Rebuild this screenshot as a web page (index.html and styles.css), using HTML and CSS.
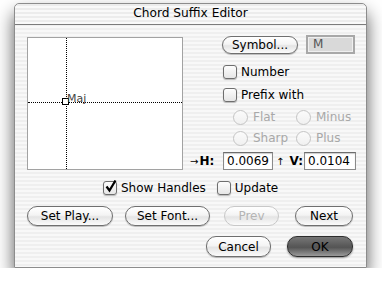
FILE: index.html
```html
<!DOCTYPE html>
<html lang="en">
<head>
  <meta charset="UTF-8">
  <title>Chord Suffix Editor</title>
  <link rel="stylesheet" href="styles.css">
</head>
<body>
  <div class="window">
    <div class="titlebar">Chord Suffix Editor</div>
    <div class="body">
      <div class="top">
        <div class="canvas">
          <div class="guide-v"></div>
          <div class="guide-h"></div>
          <div class="handle"></div>
          <span class="suffix">Maj</span>
        </div>
        <div class="side">
          <div class="symbol-row">
            <button class="btn symbol">Symbol...</button>
            <div class="field gray">M</div>
          </div>
          <label class="check first"><span class="box"></span>Number</label>
          <label class="check second"><span class="box"></span>Prefix with</label>
          <div class="radios">
            <span class="radio"><span class="dot"></span>Flat</span>
            <span class="radio"><span class="dot"></span>Minus</span>
            <span class="radio"><span class="dot"></span>Sharp</span>
            <span class="radio"><span class="dot"></span>Plus</span>
          </div>
          <div class="coords">
            <span class="axis"><span class="arrow">&#8594;</span>H:</span>
            <div class="field h">0.0069</div>
            <span class="axis v"><span class="arrow">&#8593;</span> V:</span>
            <div class="field v">0.0104</div>
          </div>
        </div>
      </div>
      <div class="handles-row">
        <label class="check"><span class="box on">
          <svg width="13" height="13" viewBox="0 0 13 13"><path d="M2.5 6.5 L5.5 10.5 L11.5 0.5" fill="none" stroke="#000" stroke-width="2.2"/></svg>
        </span>Show Handles</label>
        <label class="check update"><span class="box"></span>Update</label>
      </div>
      <div class="btn-row">
        <button class="btn play">Set Play...</button>
        <button class="btn font">Set Font...</button>
        <button class="btn prev" disabled>Prev</button>
        <button class="btn next">Next</button>
      </div>
      <div class="btn-row end">
        <button class="btn cancel">Cancel</button>
        <button class="btn ok">OK</button>
      </div>
    </div>
  </div>
</body>
</html>
```

FILE: styles.css
```css
body {
  margin: 0;
  background: #ffffff;
  font-family: "DejaVu Sans", sans-serif;
  font-size: 12px;
  color: #000;
}
.window {
  box-sizing: border-box;
  width: 353px;
  height: 265px;
  margin: 3px 0 0 14px;
  border: 1px solid #8c8c8c;
  border-radius: 5px 5px 0 0;
  background: repeating-linear-gradient(#efefef 0 2px, #f8f8f8 2px 4px);
  box-shadow: 0 10px 18px rgba(0, 0, 0, 0.65);
}
.titlebar {
  height: 20px;
  line-height: 19px;
  text-align: center;
  font-size: 12.2px;
  border-bottom: 1px solid #7b7b7b;
  background: repeating-linear-gradient(#ececec 0 2px, #f9f9f9 2px 4px);
  border-radius: 5px 5px 0 0;
}
.body {
  padding: 10px 13px 0 12px;
}
.top {
  display: flex;
  align-items: flex-start;
}
.canvas {
  flex: none;
  position: relative;
  box-sizing: border-box;
  width: 156px;
  height: 133px;
  margin-top: 2px;
  background: #fff;
  border: 1px solid #a2a2a2;
}
.guide-v {
  position: absolute;
  left: 38px;
  top: 0;
  bottom: 0;
  border-left: 1px dotted #000;
}
.guide-h {
  position: absolute;
  top: 64px;
  left: 0;
  right: 0;
  border-top: 1px dotted #000;
}
.handle {
  position: absolute;
  left: 34px;
  top: 60px;
  width: 5px;
  height: 5px;
  background: #fff;
  border: 1.5px solid #000;
}
.suffix {
  position: absolute;
  left: 39px;
  top: 54px;
  font-size: 11px;
  color: #444;
}
.side {
  flex: none;
  width: 163px;
  margin-left: 7px;
}
.symbol-row {
  display: flex;
  align-items: center;
  margin-left: 32px;
}
.btn {
  flex: none;
  box-sizing: border-box;
  height: 20px;
  padding: 0;
  font-family: "DejaVu Sans", sans-serif;
  font-size: 12px;
  color: #000;
  border: 1px solid #6f6f6f;
  border-radius: 10px;
  background: linear-gradient(#ffffff, #f4f4f4 45%, #e4e4e4 55%, #fbfbfb);
  box-shadow: 0 1px 1px rgba(0, 0, 0, 0.25);
}
.btn.symbol {
  width: 76px;
  height: 18px;
  margin-top: 1px;
}
.field {
  flex: none;
  box-sizing: border-box;
  height: 18px;
  padding-left: 3px;
  line-height: 16px;
  background: #fff;
  border: 1px solid #8a8a8a;
  border-top-color: #6d6d6d;
  box-shadow: inset 0 1px 1px rgba(0, 0, 0, 0.2);
}
.field.gray {
  width: 49px;
  height: 19px;
  margin-left: 8px;
  padding-left: 5px;
  line-height: 15px;
  color: #555;
  background: #d9d9d9;
  border: 2px solid #a8a8a8;
  box-shadow: inset 0 0 0 1px #efefef;
}
.check {
  display: flex;
  align-items: center;
  height: 16px;
}
.box {
  box-sizing: border-box;
  width: 14px;
  height: 14px;
  margin-right: 4px;
  border: 1px solid #6e6e6e;
  border-radius: 3px;
  background: linear-gradient(#fdfdfd, #e6e6e6);
  box-shadow: 0 1px 1px rgba(0, 0, 0, 0.25);
  display: flex;
  align-items: center;
  justify-content: center;
}
.box svg {
  margin: -3px -1px 0 0;
}
.side .check {
  margin-left: 33px;
}
.check.first {
  margin-top: 10px;
}
.check.second {
  margin-top: 7px;
}
.radios {
  display: grid;
  grid-template-columns: 63px auto;
  row-gap: 5px;
  margin: 6px 0 0 43px;
  color: #a8a8a8;
}
.radio {
  display: flex;
  align-items: center;
  height: 16px;
}
.dot {
  box-sizing: border-box;
  width: 15px;
  height: 15px;
  margin-right: 5px;
  border: 1px solid #c4c4c4;
  border-radius: 50%;
  background: linear-gradient(#fbfbfb, #f0f0f0);
}
.coords {
  display: flex;
  align-items: center;
  margin-top: 6px;
  font-weight: bold;
}
.arrow {
  font-weight: normal;
  font-size: 10px;
  margin-right: 1px;
}
.axis {
  flex: none;
  width: 33px;
}
.axis.v {
  width: 28px;
  margin-left: 3px;
}
.field.h {
  width: 50px;
  font-weight: normal;
}
.field.v {
  width: 52px;
  font-weight: normal;
}
.handles-row {
  display: flex;
  margin: 10px 0 0 76px;
}
.check.update {
  margin-left: 11px;
}
.btn-row {
  display: flex;
  margin-top: 10px;
}
.btn.play { width: 86px; }
.btn.font { width: 85px; margin-left: 12px; }
.btn.prev {
  width: 55px;
  margin-left: 14px;
  color: #b4b4b4;
  border-color: #c8c8c8;
  box-shadow: none;
}
.btn.next { width: 58px; margin-left: 16px; }
.btn-row.end {
  justify-content: flex-end;
}
.btn.cancel {
  width: 65px;
  height: 21px;
}
.btn.ok {
  width: 66px;
  height: 21px;
  margin-left: 16px;
  border-color: #2e2e2e;
  background: linear-gradient(#777, #5a5a5a 45%, #555 55%, #9a9a9a);
  box-shadow: 0 1px 2px rgba(0, 0, 0, 0.4);
}
```
